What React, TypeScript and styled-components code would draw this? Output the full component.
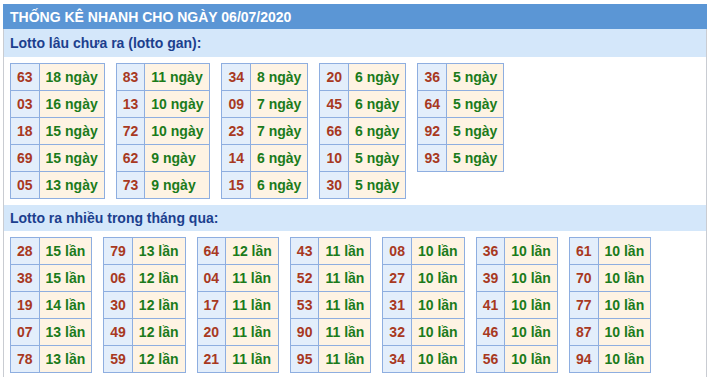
import * as React from 'react';
import styled, { createGlobalStyle } from 'styled-components';

const GlobalStyle = createGlobalStyle`
  body {
    margin: 0;
    background: #fff;
    font-family: "Liberation Sans", Arial, sans-serif;
  }
`;

const Box = styled.div`
  margin: 4px 4px 0 3px;
  width: 704px;
`;

const Title = styled.div`
  background-color: #5b96d5;
  color: #fff;
  font-weight: bold;
  font-size: 14px;
  height: 25px;
  line-height: 26px;
  padding-left: 7px;
  text-transform: uppercase;
`;

const Body = styled.div`
  border-left: 1px solid #c9ccd2;
  border-right: 1px solid #c9ccd2;
  padding-bottom: 4px;
`;

const SectionTitle = styled.div<{ $h: number }>`
  background-color: #d4e7fa;
  color: #1c3f8e;
  font-weight: bold;
  font-size: 14px;
  height: ${(p) => p.$h}px;
  line-height: ${(p) => p.$h}px;
  padding-left: 6px;
`;

const Grid = styled.div`
  display: flex;
  align-items: flex-start;
  gap: 11px;
  padding: 6px;
`;

const Table = styled.table`
  border-collapse: collapse;
  font-size: 14px;
  font-weight: bold;
`;

const Cell = styled.td`
  border: 1px solid #8eaee0;
  height: 26px;
  padding: 0 6px;
  white-space: nowrap;
`;

const Num = styled(Cell)`
  background-color: #e3eefb;
  color: #a8391f;
`;

const Count = styled(Cell)`
  background-color: #fef3e3;
  color: #1b7b1b;
`;

type Item = [string, number];

const gan: Item[][] = [
  [['63', 18], ['03', 16], ['18', 15], ['69', 15], ['05', 13]],
  [['83', 11], ['13', 10], ['72', 10], ['62', 9], ['73', 9]],
  [['34', 8], ['09', 7], ['23', 7], ['14', 6], ['15', 6]],
  [['20', 6], ['45', 6], ['66', 6], ['10', 5], ['30', 5]],
  [['36', 5], ['64', 5], ['92', 5], ['93', 5]],
];

const nhieu: Item[][] = [
  [['28', 15], ['38', 15], ['19', 14], ['07', 13], ['78', 13]],
  [['79', 13], ['06', 12], ['30', 12], ['49', 12], ['59', 12]],
  [['64', 12], ['04', 11], ['17', 11], ['20', 11], ['21', 11]],
  [['43', 11], ['52', 11], ['53', 11], ['90', 11], ['95', 11]],
  [['08', 10], ['27', 10], ['31', 10], ['32', 10], ['34', 10]],
  [['36', 10], ['39', 10], ['41', 10], ['46', 10], ['56', 10]],
  [['61', 10], ['70', 10], ['77', 10], ['87', 10], ['94', 10]],
];

function StatTable({ rows, unit }: { rows: Item[]; unit: string }) {
  return (
    <Table>
      <tbody>
        {rows.map(([n, c]) => (
          <tr key={n}>
            <Num>{n}</Num>
            <Count>
              {c} {unit}
            </Count>
          </tr>
        ))}
      </tbody>
    </Table>
  );
}

export default function App() {
  return (
    <>
      <GlobalStyle />
      <Box>
        <Title>Thống kê nhanh cho ngày 06/07/2020</Title>
        <Body>
          <SectionTitle $h={28}>Lotto lâu chưa ra (lotto gan):</SectionTitle>
          <Grid>
            {gan.map((t, i) => (
              <StatTable key={i} rows={t} unit="ngày" />
            ))}
          </Grid>
          <SectionTitle $h={26}>Lotto ra nhiều trong tháng qua:</SectionTitle>
          <Grid>
            {nhieu.map((t, i) => (
              <StatTable key={i} rows={t} unit="lần" />
            ))}
          </Grid>
        </Body>
      </Box>
    </>
  );
}
